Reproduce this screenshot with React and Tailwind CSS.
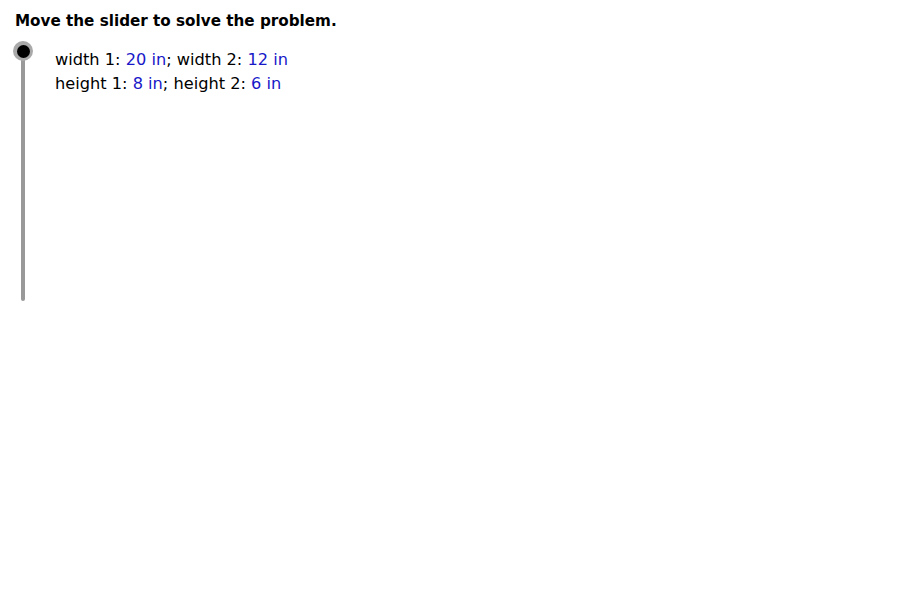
export default function App() {
  return (
    <div className="relative w-[900px] h-[600px] bg-white overflow-hidden" style={{ fontFamily: '"DejaVu Sans", "Liberation Sans", sans-serif' }}>
      <div className="pl-[15px] pt-[10px] text-[15.2px] font-bold leading-[22px] text-black">
        Move the slider to solve the problem.
      </div>
      <div className="flex items-start">
        {/* vertical slider track with its knob at the top end */}
        <div className="relative ml-[21px] mt-[19px] w-[4px] h-[250px] bg-[#999999] rounded-full">
          <div className="absolute left-[-8px] top-[-10px] w-[20px] h-[20px] rounded-full bg-[#a9a9a9] flex items-center justify-center">
            <div className="w-[13px] h-[13px] rounded-full bg-black" />
          </div>
        </div>
        <div className="ml-[30px] mt-[16px] text-[16.2px] leading-[24px] text-black">
          <div>
            width 1: <span className="text-[#1818c8]">20 in</span>; width 2: <span className="text-[#1818c8]">12 in</span>
          </div>
          <div>
            height 1: <span className="text-[#1818c8]">8 in</span>; height 2: <span className="text-[#1818c8]">6 in</span>
          </div>
        </div>
      </div>
    </div>
  );
}
